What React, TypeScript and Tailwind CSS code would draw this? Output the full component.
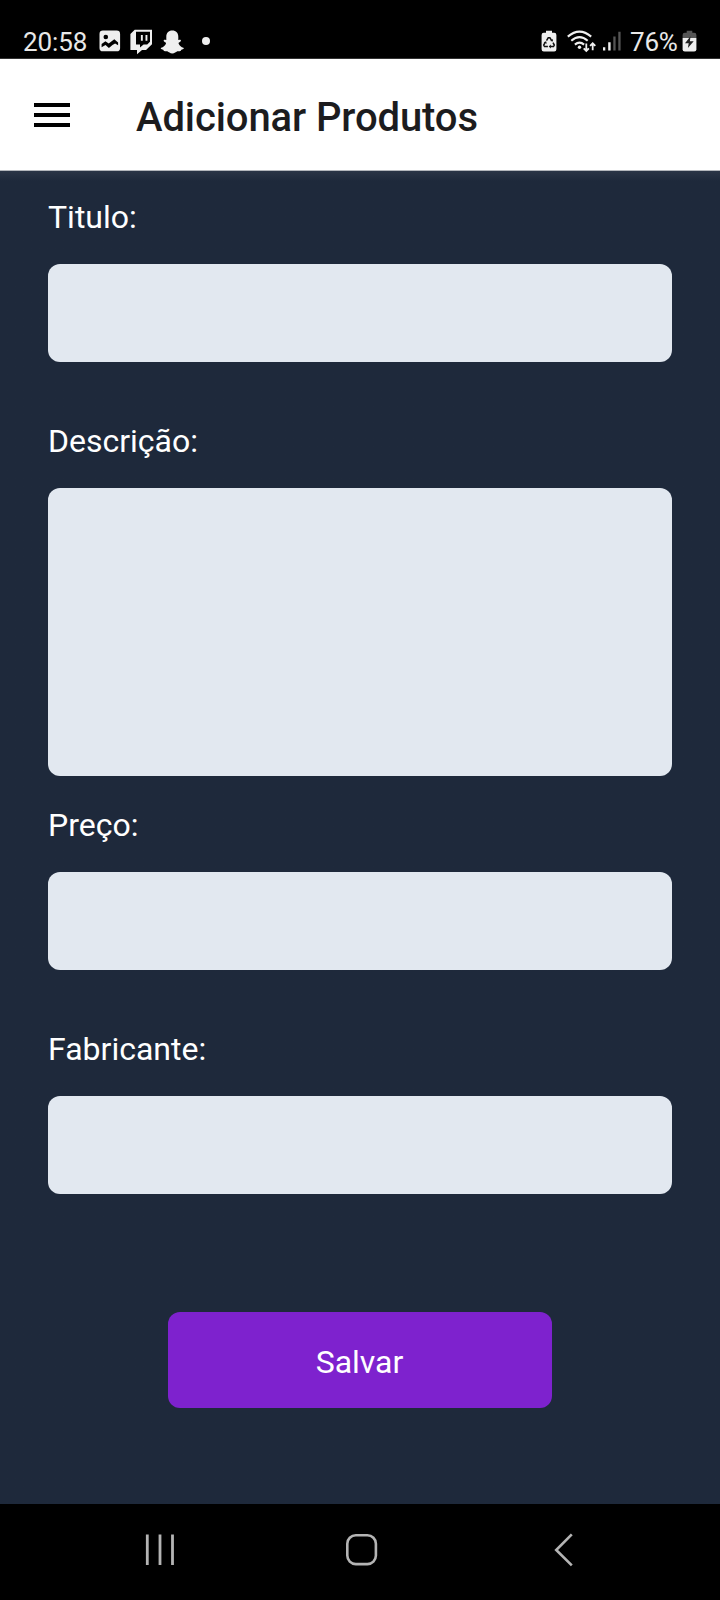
import React from "react";

function ImageIcon() {
  return (
    <svg className="ml-[11px] h-[22px] w-[22px] shrink-0" viewBox="0 0 22 22">
      <rect x="0.5" y="0.5" width="20.6" height="20.8" rx="3.4" fill="#efefef" />
      <circle cx="6.8" cy="7" r="2.3" fill="#000" />
      <path d="M2.600 17.200v-3.200l3.800-2.800 3.300 2.400 5.600-4.400 3.800 3.200v2.900l-3-1.900-2.600 1.600-3.600 3-3.400-3z" fill="#000" />
    </svg>
  );
}

function TwitchIcon() {
  return (
    <svg className="ml-[9px] mt-[2px] h-[26px] w-[23px] shrink-0" viewBox="0 0 23 26">
      <path fill="#efefef" fillRule="evenodd" d="M4.700.700H22v14.600l-6 5.600h-4L7 25.300v-4.400H.4V5zM6 2.800v12.600h4v3.200l3.600-3.200h3.600l2.800-2.700V2.800zM10.900 6h1.900v5.800h-1.900zM15.500 6h1.900v5.800h-1.900z" />
    </svg>
  );
}

function SnapIcon() {
  return (
    <svg className="ml-[7px] h-[24px] w-[25px] shrink-0" viewBox="0 0 25 24">
      <path
        fill="#efefef"
        d="M12.300.6c3.800 0 6 2.500 6 6.100v3.200c.5.3 1.600-.5 2.400.1.9.9-.4 1.800-1.700 2.400-.5.3-.5.9-.2 1.500.9 1.800 2.400 3.100 4.600 3.800 1.100.5.2 1.500-2 2-.5.2-.4 1.200-.9 1.400-.9.3-2-.2-3.200.2-1.500.7-2.700 2.200-5 2.200s-3.500-1.500-5-2.200c-1.200-.4-2.300.1-3.200-.2-.5-.2-.4-1.200-.9-1.400-2.200-.5-3.100-1.500-2-2 2.200-.7 3.700-2 4.600-3.800.3-.6.3-1.200-.2-1.500-1.300-.6-2.600-1.500-1.700-2.400.8-.6 1.900.2 2.400-.1V6.700c0-3.600 2.200-6.100 6-6.100z"
      />
    </svg>
  );
}

function RecycleBatteryIcon() {
  return (
    <svg className="h-[22px] w-[16px] shrink-0" viewBox="0 0 16 22">
      <path d="M5 .8h6v2h2.200q2.200 0 2.200 2.200v14.200q0 2.300-2.200 2.300H2.800Q.6 21.500.6 19.200V5q0-2.200 2.200-2.200H5z" fill="#efefef" />
      <g fill="none" stroke="#111" strokeWidth="1.500">
        <path d="M5.500 10.600 7.200 7.800h1.700l1.800 2.800" />
        <path d="m12 12.700 1.300 2.400-.8 1.300H9.200" />
        <path d="M6.900 16.400H3.500l-.8-1.300 1.500-2.700" />
      </g>
      <path d="m9.300 11 2.500.4.200-2.500zM9.800 14.400v4L7.700 16.400zM2.600 12.300l2.500-1 .7 2.500z" fill="#111" />
    </svg>
  );
}

function WifiIcon() {
  return (
    <svg className="ml-[10px] h-[23px] w-[30px] shrink-0" viewBox="0 0 30 23">
      <g fill="none" stroke="#efefef" strokeWidth="2.100">
        <path d="M.8 6.600Q12.500-3.400 24.200 6.600" />
        <path d="M4.300 10.700q8.200-7.200 16.400 0" />
        <path d="M7.900 14.600q4.600-4 9.200 0" />
      </g>
      <circle cx="12.500" cy="17.200" r="1.700" fill="#efefef" />
      <g fill="none" stroke="#efefef" strokeWidth="1.800">
        <path d="M19.300 13.600v7.300M16.700 18.300l2.600 2.600 2.600-2.600M25.700 20.300v-7M23.100 15.900l2.600-2.600 2.600 2.600" />
      </g>
    </svg>
  );
}

function SignalIcon() {
  return (
    <svg className="ml-[6px] h-[22px] w-[19px] shrink-0" viewBox="0 0 19 22">
      <path d="M0 17.300h2.300v3.200H0zM5.200 12.200h2.400v8.300H5.200z" fill="#efefef" />
      <path d="M10.300 6.400h2.300v14.100h-2.300zM15.300 1.700h2.300v18.800h-2.300z" fill="#555" />
    </svg>
  );
}

function ChargingBatteryIcon() {
  return (
    <svg className="ml-[4px] h-[22px] w-[16px] shrink-0" viewBox="0 0 16 22">
      <path d="M4.700.8h5.600v2h1.900Q14.400 2.800 14.400 5v3H.6V5q0-2.200 2.200-2.200h1.900z" fill="#555" />
      <path d="M.6 8h13.800v11.200q0 2.300-2.200 2.300H2.800Q.6 21.500.6 19.200z" fill="#efefef" />
      <path d="M8.500 6.200 3 13.200h3.700l-.8 4.700 5.800-6.700H7.900z" fill="#222" />
    </svg>
  );
}

function StatusBar() {
  return (
    <div className="flex h-[59px] shrink-0 items-start justify-between border-b border-[#333] bg-black pl-[24px] pr-[22px] pt-[30px] text-[26px] leading-[24px] text-[#e8e8e8]">
      <div className="flex items-start">
        <span className="-ml-px w-[65px] whitespace-nowrap tracking-[-0.1px]">20:58</span>
        <ImageIcon />
        <div className="-mt-[3px] flex"><TwitchIcon /></div>
        <SnapIcon />
        <span className="ml-[17px] mt-[7px] h-2 w-2 rounded-full bg-[#efefef]" />
      </div>
      <div className="flex items-start">
        <RecycleBatteryIcon />
        <WifiIcon />
        <SignalIcon />
        <span className="ml-[8px] w-[48px] whitespace-nowrap tracking-[-0.2px]">76%</span>
        <ChargingBatteryIcon />
      </div>
    </div>
  );
}

function Field({ id, label, multiline = false }: { id: string; label: string; multiline?: boolean }) {
  const box = "block w-full resize-none rounded-[12px] bg-slate-200 px-4 text-[32px] text-slate-900 outline-none";
  return (
    <div>
      <label htmlFor={id} className="mb-[23px] block h-[48px] text-[32px] leading-[48px] text-white">
        {label}
      </label>
      {multiline ? <textarea id={id} className={`${box} h-[288px]`} /> : <input id={id} className={`${box} h-[98px]`} />}
    </div>
  );
}

export default function App() {
  return (
    <div className="flex h-[1600px] w-[720px] flex-col overflow-hidden bg-[#1e293b] font-['Roboto',sans-serif]">
      <StatusBar />
      <header className="flex h-[112px] shrink-0 items-center border-b border-[#b4b7bc] bg-white pl-[34px]">
        <button aria-label="Menu" className="flex w-9 flex-col gap-[6px] pt-[1px]">
          <span className="h-[4px] w-9 bg-black" />
          <span className="h-[4px] w-9 bg-black" />
          <span className="h-[4px] w-9 bg-black" />
        </button>
        <h1 className="ml-[66px] mt-[6px] whitespace-nowrap text-[40px] font-medium leading-[48px] tracking-[-0.1px] text-[#1c1c1e]">Adicionar Produtos</h1>
      </header>
      <main className="flex flex-1 flex-col bg-linear-to-b from-[#2b3546] to-[#1e293b] to-[10px] px-12 pt-[22px]">
        <Field id="titulo" label="Titulo:" />
        <div className="mt-[55px]"><Field id="descricao" label="Descrição:" multiline /></div>
        <div className="mt-[25px]"><Field id="preco" label="Preço:" /></div>
        <div className="mt-[55px]"><Field id="fabricante" label="Fabricante:" /></div>
        <button className="mt-[118px] h-[96px] w-[384px] self-center rounded-[12px] bg-[#7e22ce] pr-[1px] pt-[3px] text-[32px] text-white">Salvar</button>
      </main>
      <nav className="flex h-[96px] shrink-0 items-start bg-black pt-[29px]">
        <svg className="ml-[145px] h-8 w-[30px]" viewBox="0 0 30 32" stroke="#b4b4b4" strokeWidth="2.800">
          <path d="M2.300 1.500V32M15 1.500V32M27.500 1.500V32" />
        </svg>
        <svg className="ml-[170px] h-[34px] w-[34px]" viewBox="0 0 34 34" fill="none" stroke="#b4b4b4" strokeWidth="2.600">
          <rect x="2.300" y="2.300" width="28.600" height="28.800" rx="8.500" />
        </svg>
        <svg className="ml-[174px] h-[34px] w-[22px]" viewBox="0 0 22 34" fill="none" stroke="#b4b4b4" strokeWidth="2.600">
          <path d="M18.800 1.300 3.200 17 18.800 32.400" />
        </svg>
      </nav>
    </div>
  );
}
